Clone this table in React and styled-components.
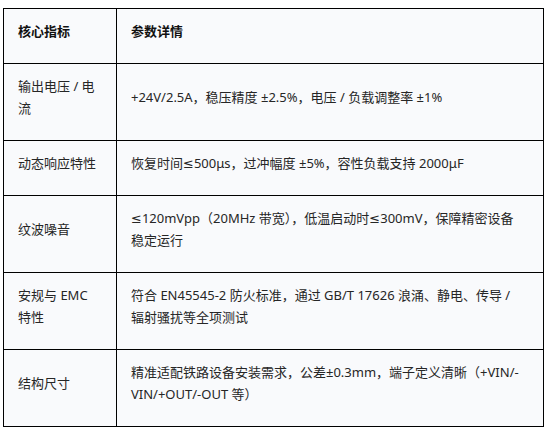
import React from 'react'
import styled, { createGlobalStyle } from 'styled-components'

const GlobalStyle = createGlobalStyle`
  html, body {
    margin: 0;
    padding: 0;
    background: #ffffff;
  }
  body {
    font-family: "Noto Sans", "DejaVu Sans", "Noto Sans CJK SC", sans-serif;
  }
`

const Page = styled.div`
  padding: 8px 0 0 3px;
`

const Table = styled.table`
  width: 541px;
  border-collapse: collapse;
  table-layout: fixed;
  background: #f9fafc;
  color: #262626;
  font-size: 13px;
  line-height: 22px;
`

const Cell = styled.td`
  border: 1px solid #000000;
  padding: 11px ${p => (p.$detail ? '23px' : '14px')} 21px 14px;
  vertical-align: middle;
  text-align: left;
  word-break: break-word;
`

const HeadCell = styled(Cell).attrs({ as: 'th' })`
  font-weight: 700;
  color: #111111;
`

const rows = [
  ['输出电压 / 电流', '+24V/2.5A，稳压精度 ±2.5%，电压 / 负载调整率 ±1%'],
  ['动态响应特性', '恢复时间≤500μs，过冲幅度 ±5%，容性负载支持 2000μF'],
  ['纹波噪音', '≤120mVpp（20MHz 带宽），低温启动时≤300mV，保障精密设备稳定运行'],
  ['安规与 EMC 特性', '符合 EN45545-2 防火标准，通过 GB/T 17626 浪涌、静电、传导 / 辐射骚扰等全项测试'],
  ['结构尺寸', '精准适配铁路设备安装需求，公差±0.3mm，端子定义清晰（+VIN/-VIN/+OUT/-OUT 等）'],
]

export default function App() {
  return (
    <>
      <GlobalStyle />
      <Page>
        <Table>
          <colgroup>
            <col style={{ width: '113px' }} />
            <col />
          </colgroup>
          <thead>
            <tr>
              <HeadCell>核心指标</HeadCell>
              <HeadCell $detail>参数详情</HeadCell>
            </tr>
          </thead>
          <tbody>
            {rows.map(([name, detail]) => (
              <tr key={name}>
                <Cell>{name}</Cell>
                <Cell $detail>{detail}</Cell>
              </tr>
            ))}
          </tbody>
        </Table>
      </Page>
    </>
  )
}
